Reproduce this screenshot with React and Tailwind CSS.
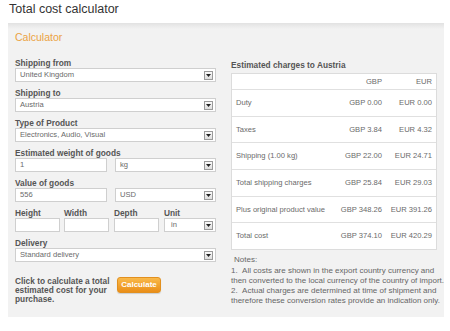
const Arrow = () => (
  <span className="w-[9px] h-[9px] border border-[#9a9a9a] bg-[linear-gradient(#fafafa,#dedede)] flex items-center justify-center">
    <svg width="5" height="3" viewBox="0 0 5 3">
      <path d="M0 0h5L2.5 3z" fill="#222" />
    </svg>
  </span>
);

const Select = ({ value, className = '' }) => (
  <div className={`h-[14px] border border-[#cfcfcf] bg-white flex items-center justify-between pl-[4px] pr-[2px] text-[7.6px] text-[#6a6a6a] ${className}`}>
    <span>{value}</span>
    <Arrow />
  </div>
);

const Input = ({ value = '', className = '' }) => (
  <div className={`h-[14px] border border-[#cfcfcf] bg-white flex items-center pl-[4px] text-[7.6px] text-[#6a6a6a] ${className}`}>
    {value}
  </div>
);

const Label = ({ children }) => (
  <div className="h-[10px] leading-[10px] text-[8.3px] font-bold text-[#555] whitespace-nowrap">{children}</div>
);

const rows = [
  ['Duty', 'GBP 0.00', 'EUR 0.00'],
  ['Taxes', 'GBP 3.84', 'EUR 4.32'],
  ['Shipping (1.00 kg)', 'GBP 22.00', 'EUR 24.71'],
  ['Total shipping charges', 'GBP 25.84', 'EUR 29.03'],
  ['Plus original product value', 'GBP 348.26', 'EUR 391.26'],
  ['Total cost', 'GBP 374.10', 'EUR 420.29'],
];

export default function App() {
  return (
    <div className="w-[450px] h-[331px] bg-white overflow-hidden font-['Liberation_Sans',Arial,sans-serif]">
      <h1 className="h-[23px] pt-[2px] pl-[9px] text-[12.5px] leading-[15px] text-[#333]">Total cost calculator</h1>

      <div className="ml-[8px] w-[436px] h-[294px] pt-[8px] px-[7px] bg-[linear-gradient(to_bottom,#e2e2e2,#f2f2f2_6px)]">
        <div className="h-[12px] leading-[12px] text-[10.5px] text-[#eba343]">Calculator</div>

        <div className="flex mt-[15px]">
          {/* form */}
          <div className="w-[201px] flex flex-col">
            <div className="flex flex-col gap-[6px]">
              <div>
                <Label>Shipping from</Label>
                <Select value="United Kingdom" />
              </div>
              <div>
                <Label>Shipping to</Label>
                <Select value="Austria" />
              </div>
              <div>
                <Label>Type of Product</Label>
                <Select value="Electronics, Audio, Visual" />
              </div>
              <div>
                <Label>Estimated weight of goods</Label>
                <div className="flex gap-[8px]">
                  <Input value="1" className="w-[92px]" />
                  <Select value="kg" className="flex-1" />
                </div>
              </div>
              <div>
                <Label>Value of goods</Label>
                <div className="flex gap-[8px]">
                  <Input value="556" className="w-[92px]" />
                  <Select value="USD" className="flex-1" />
                </div>
              </div>
              <div className="flex">
                <div className="w-[45px]">
                  <Label>Height</Label>
                  <Input />
                </div>
                <div className="w-[45px] ml-[4px]">
                  <Label>Width</Label>
                  <Input />
                </div>
                <div className="w-[45px] ml-[5px]">
                  <Label>Depth</Label>
                  <Input />
                </div>
                <div className="flex-1 ml-[5px]">
                  <Label>Unit</Label>
                  <Select value="in" className="pl-[6px]" />
                </div>
              </div>
              <div>
                <Label>Delivery</Label>
                <Select value="Standard delivery" />
              </div>
            </div>

            <div className="flex items-start mt-[15px]">
              <p className="w-[102px] text-[8.3px] leading-[9px] font-bold text-[#555]">
                Click to calculate a total<br />estimated cost for your<br />purchase.
              </p>
              <button className="w-[44px] h-[16px] rounded-[3px] border border-[#e2901f] bg-[linear-gradient(#f9b94a,#ea8e18)] text-white text-[8px] font-bold shadow-[0_1px_1px_rgba(0,0,0,0.15)]">
                Calculate
              </button>
            </div>
          </div>

          {/* results */}
          <div className="ml-[15px] w-[206px] pt-[2px]">
            <div className="mb-[3px]">
              <Label>Estimated charges to Austria</Label>
            </div>
            <div className="border border-[#dcdcdc] bg-white text-[7.6px] text-[#6a6a6a]">
              <div className="h-[15px] flex items-center">
                <span className="flex-1" />
                <span className="w-[54px] text-right pr-[4px]">GBP</span>
                <span className="w-[50px] text-right pr-[4px]">EUR</span>
              </div>
              {rows.map(([label, gbp, eur]) => (
                <div key={label} className="h-[26.67px] border-t border-[#e0e0e0] flex items-center">
                  <span className="flex-1 pl-[4px] whitespace-nowrap">{label}</span>
                  <span className="w-[54px] text-right pr-[4px] whitespace-nowrap">{gbp}</span>
                  <span className="w-[50px] text-right pr-[4px] whitespace-nowrap">{eur}</span>
                </div>
              ))}
            </div>

            <div className="mt-[5px] w-[214px] text-[8px] leading-[10px] text-[#666]">
              <div className="pl-[3px] mb-[1px]">Notes:</div>
              <div className="whitespace-nowrap">1.&nbsp;&nbsp;All costs are shown in the export country currency and</div>
              <div className="whitespace-nowrap">then converted to the local currency of the country of import.</div>
              <div className="whitespace-nowrap">2.&nbsp;&nbsp;Actual charges are determined at time of shipment and</div>
              <div className="whitespace-nowrap">therefore these conversion rates provide an indication only.</div>
            </div>
          </div>
        </div>
      </div>
    </div>
  );
}
